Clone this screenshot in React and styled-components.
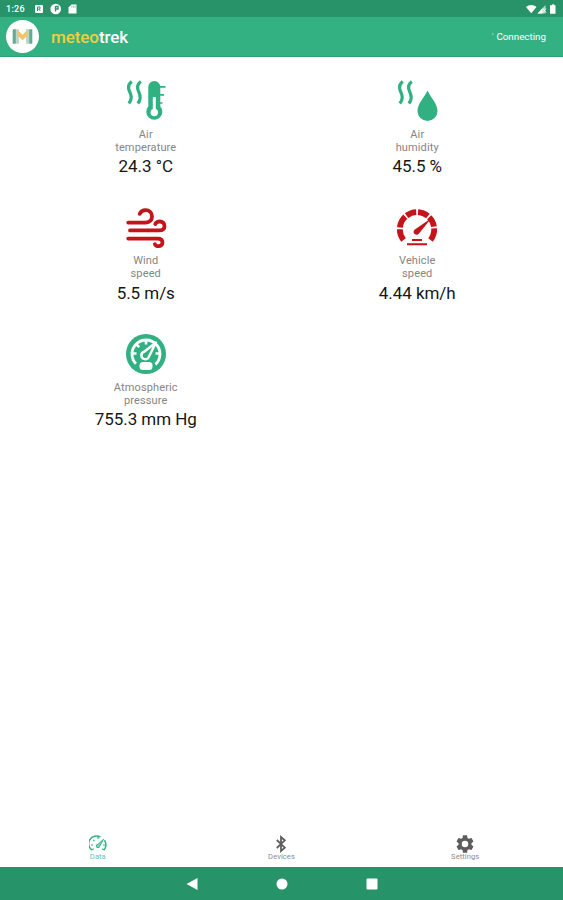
import React from 'react';
import styled, { createGlobalStyle } from 'styled-components';

const GREEN = '#31b081';
const DARK = '#289269';
const RED = '#c4141a';

const GlobalStyle = createGlobalStyle`
  * { box-sizing: border-box; }
  body { margin: 0; background: #fff; font-family: Roboto, "Liberation Sans", sans-serif; }
  svg { display: block; }
`;

const Screen = styled.div`
  display: flex;
  flex-direction: column;
  width: 563px;
  height: 900px;
  background: #fff;
`;

const StatusBar = styled.div`
  display: flex;
  align-items: center;
  height: 17px;
  padding: 1px 4px 0 6px;
  background: ${DARK};
  color: #fff;
`;

const Clock = styled.span`
  width: 28px;
  font-size: 9px;
  line-height: 12px;
  font-weight: 500;
  letter-spacing: 0.3px;
`;

const StatusIcons = styled.div`
  display: flex;
  align-items: center;
  margin-left: ${(p) => (p.$end ? 'auto' : '0')};
`;

const Header = styled.header`
  display: flex;
  align-items: center;
  height: 40px;
  padding: 0 17px 0 6px;
  background: #33b182;
  border-bottom: 1px solid #2aa576;
`;

const Logo = styled.div`
  display: grid;
  place-items: center;
  width: 33px;
  height: 33px;
  border-radius: 50%;
  background: #fff;
`;

const Brand = styled.h1`
  margin: 0 0 0 12px;
  font-size: 17px;
  line-height: 20px;
  font-weight: 500;
  letter-spacing: -0.08px;
  color: #fff;
`;

const BrandAccent = styled.span`
  color: #eed03c;
`;

const Connection = styled.span`
  margin-left: auto;
  padding-top: 1px;
  font-size: 9.8px;
  line-height: 12px;
  color: #fff;
`;

const Tick = styled.span`
  margin-right: 3px;
  opacity: 0.6;
`;

const Readings = styled.main`
  display: grid;
  grid-template-columns: 1fr 1fr;
  grid-auto-rows: 126.5px;
  flex: 1;
  padding: 23px 10px 0;
`;

const Reading = styled.section`
  display: flex;
  flex-direction: column;
  align-items: center;
  text-align: center;
`;

const Label = styled.div`
  width: 80px;
  margin-top: 5.500px;
  font-size: 11px;
  line-height: 13px;
  letter-spacing: 0.13px;
  color: #858585;
`;

const Value = styled.div`
  margin-top: 2.500px;
  font-size: 17px;
  line-height: 20px;
  letter-spacing: -0.05px;
  color: #161616;
`;

const Tabs = styled.nav`
  display: grid;
  grid-template-columns: repeat(3, 1fr);
  height: 34px;
  padding: 0 6px;
`;

const Tab = styled.div`
  display: flex;
  flex-direction: column;
  align-items: center;
  padding-top: 2px;
  color: ${(p) => (p.$active ? GREEN : '#5d5d5d')};
`;

const TabLabel = styled.span`
  margin-top: -1px;
  font-size: 7.6px;
  line-height: 9px;
  letter-spacing: 0.05px;
  color: ${(p) => (p.$active ? '#6fc4a5' : '#8c8c8c')};
`;

const SystemBar = styled.div`
  display: flex;
  justify-content: center;
  align-items: center;
  gap: 78px;
  height: 33px;
  background: #279369;
`;

const Steam = () => (
  <g fill="none" stroke={GREEN} strokeWidth="3.200">
    <path d="M6.800 1.500c-4 3-4 6.500-2 10.500 2 4 2.500 7.500-1 11.500" />
    <path d="M15.800 1.500c-4 3-4 6.500-2 10.500 2 4 2.500 7.500-1 11.500" />
  </g>
);

const Temperature = () => (
  <svg width="42" height="42" viewBox="0 0 42 42">
    <Steam />
    <path fill={GREEN} d="M23.300 7a6 6 0 0 1 12 0v19.500a8 8 0 1 1-12 0z" />
    <path d="M34 6.800h6.500M34 14.800h5M34 23h3.500" stroke={GREEN} strokeWidth="1.700" />
    <path d="M29.300 17v14" stroke="#fff" strokeWidth="3" />
    <circle cx="29.300" cy="32.500" r="3.700" fill="#fff" />
  </svg>
);

const Humidity = () => (
  <svg width="42" height="42" viewBox="0 0 42 42">
    <Steam />
    <path fill={GREEN} d="M31.500 10.500c2.500 6 10 13 10 20.500a10 10 0 0 1-20 0c0-7.500 7.500-14.500 10-20.500z" />
  </svg>
);

const Wind = () => (
  <svg width="42" height="42" viewBox="0 0 42 42">
    <g fill="none" stroke={RED} strokeWidth="3.800" strokeLinecap="round">
      <path d="M3.200 15.600h17.500c4.200 0 6.300-2.800 6.300-6 0-4-2.800-6.500-6.300-6.500-3 0-5 1.300-6 3.800" />
      <path d="M5 23.400h29c3.800 0 5.500-2 5.500-4.500 0-2.700-2-4.400-4.700-4.400-2.100 0-3.600.8-4.500 2.500" />
      <path d="M3.200 31.600h29.300c3.500 0 5 1.700 5 3.900s-1.600 3.700-4 3.700c-1.900 0-3-.7-3.600-2" />
    </g>
  </svg>
);

const Speed = () => (
  <svg width="42" height="42" viewBox="0 0 42 42">
    <path
      d="M7.500 33A17.200 17.200 0 1 1 34.500 33"
      fill="none"
      stroke={RED}
      strokeWidth="5.800"
      pathLength="100"
      strokeDasharray="15 2.300 16 2.300 13.400 2.300 14 2.300 14 2.300 17 2"
    />
    <path fill={RED} d="M35.500 11L23 26.500c-2.500 3-7.500 0-4.500-3.700z" />
    <path d="M16 33h10M11 37.300h20" stroke={RED} strokeWidth="1.900" />
  </svg>
);

const Pressure = () => (
  <svg width="42" height="42" viewBox="0 0 42 42">
    <circle cx="21" cy="21" r="20" fill={GREEN} />
    <circle cx="21" cy="21" r="14" fill="none" stroke="#fff" strokeWidth="2.800" strokeDasharray="66 22" transform="rotate(136 21 21)" />
    <path d="M7.500 20.500h4M11.500 11.500l2.700 2.700M21 7.500v4M34.500 20.500h-4" stroke="#fff" strokeWidth="2.600" />
    <path d="M31 9.500L19.500 18.500a3.900 3.900 0 1 0 4.500 5z" fill={GREEN} stroke="#fff" strokeWidth="2.400" strokeLinejoin="round" />
    <rect x="14.500" y="29" width="13" height="8" rx="3.500" fill="#fff" />
  </svg>
);

const Gauge = () => (
  <svg width="18" height="18" viewBox="0 0 18 18" fill="none" stroke={GREEN}>
    <path d="M3.200 15.200A7.600 7.600 0 0 1 11.500 2.200M15.400 5.300a7.600 7.600 0 0 1-.6 9.900" strokeWidth="1.500" />
    <path d="M2 10h2M4.200 5l1.200 1.200M9 2v2M16 10h-2M3 14.700l2-1M15 14.700l-2-1" strokeWidth="1.200" />
    <path d="M14.500 4.300L9 9.300a1.700 1.700 0 1 0 1.700 1.700z" fill={GREEN} fillOpacity=".55" strokeWidth="1" />
  </svg>
);

const Bluetooth = () => (
  <svg width="18" height="18" viewBox="0 0 18 18" fill="none" stroke="currentColor">
    <path d="M4.800 5l8 7.700L9 16V2l3.800 3.300-8 7.700" strokeWidth="1.800" />
  </svg>
);

const Gear = () => (
  <svg width="20" height="18" viewBox="1.200 2 21.600 20">
    <path
      fill="currentColor"
      d="M19.140 12.940c.04-.3.060-.61.060-.94 0-.32-.02-.64-.07-.94l2.030-1.580c.18-.14.230-.41.120-.61l-1.920-3.320c-.12-.22-.37-.29-.59-.22l-2.390.96c-.5-.38-1.030-.7-1.620-.94l-.36-2.540c-.04-.24-.24-.41-.48-.41h-3.840c-.24 0-.43.170-.47.410l-.36 2.540c-.59.240-1.130.57-1.620.94l-2.390-.96c-.22-.08-.47 0-.59.220L2.740 8.870c-.12.210-.08.470.12.610l2.030 1.580c-.05.300-.09.630-.09.940s.02.640.07.940l-2.030 1.580c-.18.140-.23.410-.12.610l1.920 3.320c.12.220.37.290.59.220l2.390-.96c.5.380 1.030.7 1.620.94l.36 2.540c.05.240.24.410.48.410h3.840c.24 0 .44-.17.47-.41l.36-2.540c.59-.24 1.130-.56 1.620-.94l2.390.96c.22.080.47 0 .59-.22l1.920-3.320c.12-.22.070-.47-.12-.61l-2.010-1.580zM12 15.600A3.600 3.600 0 1 1 12 8.400a3.600 3.600 0 0 1 0 7.200z"
    />
  </svg>
);

const LogoMark = () => (
  <svg width="21" height="17" viewBox="0 0 23 18">
    <path d="M2.500 1v16M20.500 1v16" stroke="#66aa91" strokeWidth="3.500" />
    <path d="M6 1v16M17 1v16" stroke="#b5d3c5" strokeWidth="3" />
    <path d="M6 2l5.500 5L17 2v6l-5.500 5L6 8z" fill="#f3c568" />
  </svg>
);

const Notifications = () => (
  <svg width="45" height="12" viewBox="0 0 45 12">
    <rect x="1" y="2" width="8" height="8" rx="1" fill="#fff" />
    <path d="M3.500 8V4h2.500v2H4.500l2 2" fill="none" stroke={DARK} />
    <circle cx="21.700" cy="6" r="5.300" fill="#fff" />
    <path d="M21.500 3V8.500M21.500 3.500h2.500v2.500h-2.500" fill="none" stroke={DARK} strokeWidth="1.300" />
    <path d="M37.500 1.500h5v9h-8V4.500z" fill="#fff" />
    <path d="M37.800 2.700v2M39.500 2.700v2M41.200 2.700v2" stroke={DARK} strokeWidth=".5" />
  </svg>
);

const Signals = () => (
  <svg width="34" height="12" viewBox="0 0 34 12">
    <path d="M1 4c3-2.700 7.500-2.700 10.500 0L6.200 10.200z" fill="#fff" />
    <path d="M20.500 2v8.500h-8z" fill="#b7dacb" />
    <path d="M17.500 5.200v5.300h-5z" fill="#fff" />
    <path d="M18 5.500l3 4M21 5.500l-3 4" stroke="#fff" strokeWidth=".8" />
    <path d="M27.200 1.300h2v1h1.300v8.500H25V2.300h2.200z" fill="#fff" />
  </svg>
);

const readings = [
  { icon: Temperature, label: ['Air', 'temperature'], value: '24.3 °C' },
  { icon: Humidity, label: ['Air', 'humidity'], value: '45.5 %' },
  { icon: Wind, label: ['Wind', 'speed'], value: '5.5 m/s' },
  { icon: Speed, label: ['Vehicle', 'speed'], value: '4.44 km/h' },
  { icon: Pressure, label: ['Atmospheric', 'pressure'], value: '755.3 mm Hg' },
];

const tabs = [
  { icon: Gauge, label: 'Data', active: true },
  { icon: Bluetooth, label: 'Devices' },
  { icon: Gear, label: 'Settings' },
];

export default function App() {
  return (
    <Screen>
      <GlobalStyle />
      <StatusBar>
        <Clock>1:26</Clock>
        <StatusIcons><Notifications /></StatusIcons>
        <StatusIcons $end><Signals /></StatusIcons>
      </StatusBar>
      <Header>
        <Logo><LogoMark /></Logo>
        <Brand><BrandAccent>meteo</BrandAccent>trek</Brand>
        <Connection><Tick>'</Tick>Connecting</Connection>
      </Header>
      <Readings>
        {readings.map(({ icon: Icon, label, value }) => (
          <Reading key={label.join(' ')}>
            <Icon />
            <Label>{label[0]}<br />{label[1]}</Label>
            <Value>{value}</Value>
          </Reading>
        ))}
      </Readings>
      <Tabs>
        {tabs.map(({ icon: Icon, label, active }) => (
          <Tab key={label} $active={active}>
            <Icon />
            <TabLabel $active={active}>{label}</TabLabel>
          </Tab>
        ))}
      </Tabs>
      <SystemBar>
        <svg width="12" height="12" viewBox="0 0 12 12"><path d="M11.500 0v12L.5 6z" fill="#fff" /></svg>
        <svg width="12" height="12" viewBox="0 0 12 12"><circle cx="6" cy="6" r="5.500" fill="#fff" /></svg>
        <svg width="12" height="12" viewBox="0 0 12 12"><rect x=".5" y=".5" width="11" height="11" rx="1" fill="#fff" /></svg>
      </SystemBar>
    </Screen>
  );
}
